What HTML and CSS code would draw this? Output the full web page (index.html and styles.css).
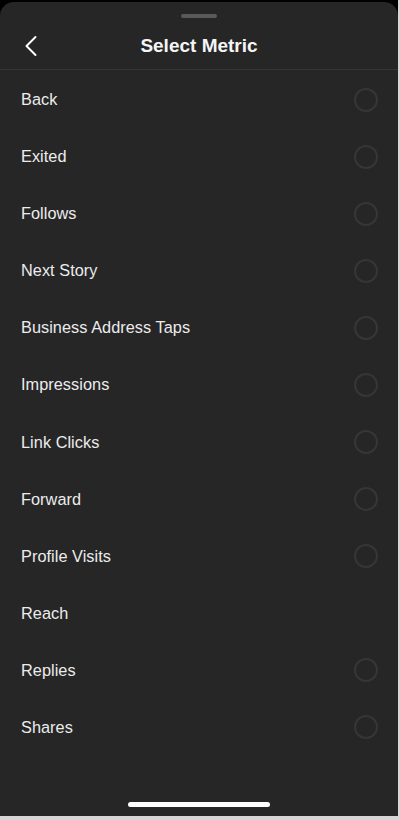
FILE: index.html
```html
<!DOCTYPE html>
<html lang="en">
<head>
<meta charset="utf-8">
<title>Select Metric</title>
<link rel="stylesheet" href="styles.css">
</head>
<body>
<div class="frame">
  <div class="sheet">
    <div class="handle"></div>
    <header class="header">
      <button class="back" aria-label="Back">
        <svg width="14" height="22" viewBox="0 0 14 22"><path d="M11.5 2 L2.5 11 L11.5 20" fill="none" stroke="#fff" stroke-width="2" stroke-linecap="round" stroke-linejoin="round"/></svg>
      </button>
      <h1 class="title">Select Metric</h1>
    </header>
    <ul class="list">
      <li class="row"><span>Back</span><i class="radio"></i></li>
      <li class="row"><span>Exited</span><i class="radio"></i></li>
      <li class="row"><span>Follows</span><i class="radio"></i></li>
      <li class="row"><span>Next Story</span><i class="radio"></i></li>
      <li class="row"><span>Business Address Taps</span><i class="radio"></i></li>
      <li class="row"><span>Impressions</span><i class="radio"></i></li>
      <li class="row"><span>Link Clicks</span><i class="radio"></i></li>
      <li class="row"><span>Forward</span><i class="radio"></i></li>
      <li class="row"><span>Profile Visits</span><i class="radio"></i></li>
      <li class="row"><span>Reach</span></li>
      <li class="row"><span>Replies</span><i class="radio"></i></li>
      <li class="row"><span>Shares</span><i class="radio"></i></li>
    </ul>
    <div class="home"></div>
  </div>
</div>
</body>
</html>
```

FILE: styles.css
```css
* { box-sizing: border-box; }
html, body { margin: 0; padding: 0; }
body {
  background: #d6d6d6;
  width: 400px;
  height: 820px;
  overflow: hidden;
  font-family: "Liberation Sans", Arial, sans-serif;
}
.frame {
  width: 398px;
  height: 816px;
  background: #000;
  padding-top: 2px;
}
.sheet {
  height: 814px;
  background: #262626;
  border-radius: 14px 14px 0 0;
  display: flex;
  flex-direction: column;
}
.handle {
  width: 36px;
  height: 4px;
  border-radius: 2px;
  background: #5a5a5a;
  margin: 12px auto 0;
}
.header {
  height: 52px;
  display: flex;
  align-items: center;
  justify-content: center;
  position: relative;
  border-bottom: 1px solid #353535;
}
.back {
  position: absolute;
  left: 24px;
  top: 17px;
  background: none;
  border: 0;
  padding: 0;
  display: flex;
}
.title {
  margin: 0;
  color: #f5f5f5;
  font-size: 19px;
  font-weight: bold;
  margin-top: 4px;
}
.list {
  list-style: none;
  margin: 0;
  padding: 1px 0 0;
  flex: 1;
}
.row {
  height: 57.08px;
  display: flex;
  align-items: center;
  justify-content: space-between;
  padding: 0 20px 0 21px;
  color: #ececec;
  font-size: 16.3px;
  letter-spacing: 0.05px;
}
.radio {
  width: 24px;
  height: 24px;
  border: 2px solid #363636;
  border-radius: 50%;
}
.home {
  width: 142px;
  height: 5px;
  border-radius: 3px;
  background: #fff;
  margin: 0 auto 9px;
}
```
